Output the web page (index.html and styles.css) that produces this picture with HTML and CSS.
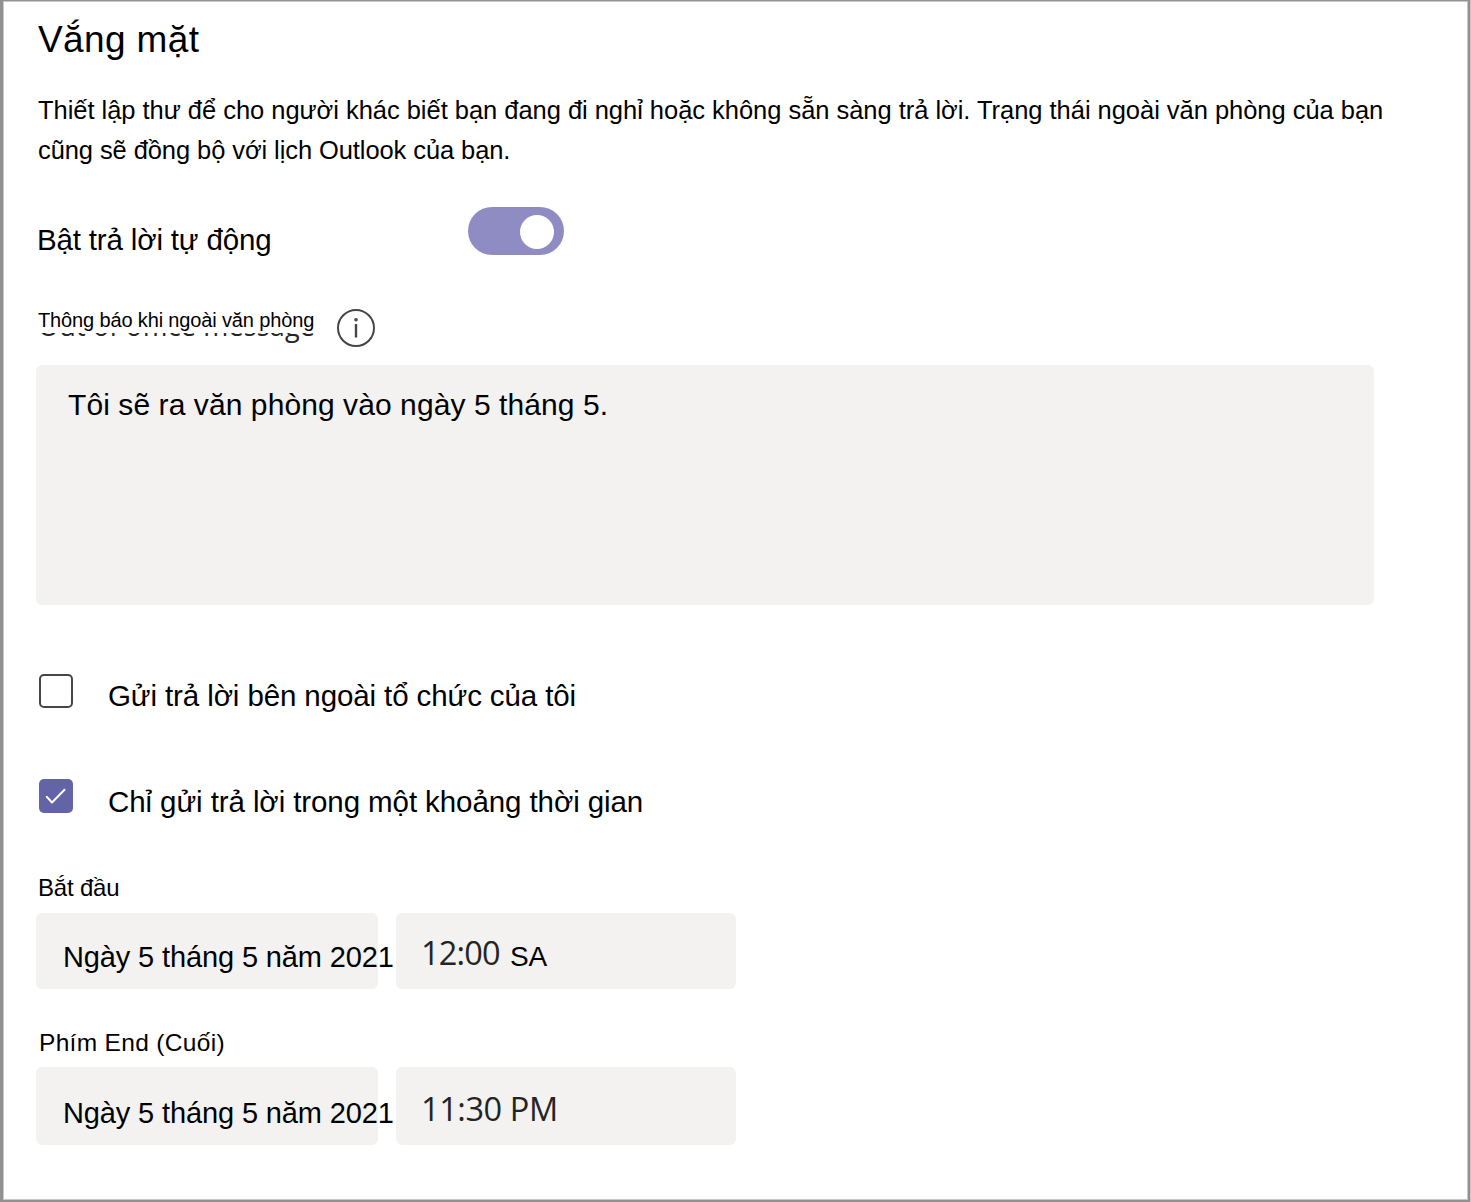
FILE: index.html
```html
<!DOCTYPE html>
<html lang="vi">
<head>
<meta charset="utf-8">
<title>Vắng mặt</title>
<link rel="stylesheet" href="styles.css">
</head>
<body>
<main class="panel">
  <h1 class="title">Vắng mặt</h1>
  <p class="intro">Thiết lập thư để cho người khác biết bạn đang đi nghỉ hoặc không sẵn sàng trả lời. Trạng thái ngoài văn phòng của bạn<br><span class="intro-end">cũng sẽ đồng bộ với lịch Outlook của bạn.</span></p>
  <div class="toggle-row">
    <span class="toggle-label">Bật trả lời tự động</span>
    <span class="toggle" role="switch" aria-checked="true"><span class="knob"></span></span>
  </div>
  <div class="message-head">
    <div class="message-label">
      <span class="message-text">Thông báo khi ngoài văn phòng</span>
      <span class="message-under"><span class="message-source">Out of office message</span></span>
    </div>
    <svg class="info" viewBox="0 0 40 40" width="40" height="40"><circle cx="20" cy="20" r="18" fill="none" stroke="#484644" stroke-width="2"/><circle cx="20" cy="11.800" r="1.800" fill="#484644"/><path d="M20 16v13.500" stroke="#484644" stroke-width="2.400"/></svg>
  </div>
  <div class="message-box">Tôi sẽ ra văn phòng vào ngày 5 tháng 5.</div>
  <div class="check-row outside">
    <span class="box"></span>
    <span class="check-label">Gửi trả lời bên ngoài tổ chức của tôi</span>
  </div>
  <div class="check-row period">
    <span class="box checked"><svg viewBox="0 0 34 34" width="34" height="34"><path d="M7.800 17.800l5.200 5.700L25.500 10.800" fill="none" stroke="#fff" stroke-width="2" stroke-linecap="round" stroke-linejoin="round"/></svg></span>
    <span class="check-label">Chỉ gửi trả lời trong một khoảng thời gian</span>
  </div>
  <div class="field-label start">Bắt đầu</div>
  <div class="fields">
    <div class="field date">Ngày 5 tháng 5 năm 2021</div>
    <div class="field time"><span class="clock">12:00</span><span class="half">SA</span></div>
  </div>
  <div class="field-label end">Phím End (Cuối)</div>
  <div class="fields last">
    <div class="field date">Ngày 5 tháng 5 năm 2021</div>
    <div class="field time"><span class="clock">11:30 PM</span></div>
  </div>
</main>
</body>
</html>
```
FILE: styles.css
```css
* { box-sizing: border-box; }
body { margin: 0; background: #c8c8c8; color: #000; font-family: "Liberation Sans", Arial, sans-serif; white-space: nowrap; }
.panel { width: 1470px; height: 1202px; overflow: hidden; padding: 19px 0 0 33px; border: solid #919191; border-width: 1px 2px 2px 3px; background: #fff; box-shadow: inset 0 0 0 1px #c8c8c8; }
.title { margin: 0 0 30px 2px; font-size: 37px; line-height: 40px; font-weight: 400; letter-spacing: 0.37px; }
.intro { margin: 0 0 0 2px; font-size: 25.5px; line-height: 40px; letter-spacing: -0.034px; }
.intro-end { letter-spacing: -0.09px; }
.toggle-row { display: flex; margin-top: 37px; height: 48px; }
.toggle-label { width: 432px; padding-left: 1px; font-size: 29.5px; line-height: 66px; letter-spacing: -0.16px; }
.toggle { display: flex; justify-content: flex-end; width: 96px; height: 48px; padding: 8px 10px; border-radius: 24px; background: #8e8cc3; }
.knob { width: 34px; height: 34px; border-radius: 50%; background: #fff; }
.message-head { display: flex; margin-top: 53px; height: 40px; }
.message-label { width: 300px; padding-left: 2px; }
.message-text { display: block; font-size: 20px; line-height: 25px; height: 25px; letter-spacing: -0.14px; }
.message-under { display: block; height: 14px; overflow: hidden; }
.message-source { display: block; margin-top: -21px; color: #252423; font: 27px/27px "Open Sans", sans-serif; letter-spacing: 0.17px; }
.message-box { margin-top: 17px; width: 1338px; height: 240px; border-radius: 6px; background: #f3f2f1; padding: 20px 32px; font-size: 30px; line-height: 40px; letter-spacing: 0.08px; }
.check-row { display: flex; gap: 35px; height: 34px; padding-left: 3px; font-size: 29.5px; line-height: 44px; letter-spacing: -0.11px; }
.outside { margin-top: 69px; }
.period { margin-top: 71px; line-height: 46px; letter-spacing: -0.09px; }
.box { width: 34px; height: 34px; border: 2px solid #484644; border-radius: 5px; }
.checked { border: 0; background: #6264a7; }
.box svg { display: block; }
.field-label { padding-left: 2px; font-size: 24px; line-height: 30px; letter-spacing: -0.2px; }
.start { margin-top: 60px; }
.end { margin-top: 39px; padding-left: 3px; font-size: 24.5px; letter-spacing: 0.32px; }
.fields { display: flex; gap: 18px; margin-top: 10px; }
.last { margin-top: 9px; }
.field { display: flex; height: 76px; border-radius: 6px; background: #f3f2f1; }
.last .field { height: 78px; }
.date { width: 342px; padding-left: 27px; font-size: 29px; line-height: 88px; letter-spacing: -0.13px; }
.last .date { line-height: 92px; }
.time { width: 340px; padding-left: 25px; }
.clock { color: #252423; font: 32.5px/80px "Open Sans", sans-serif; letter-spacing: -0.8px; }
.last .clock { line-height: 83px; letter-spacing: -0.42px; }
.half { margin-left: 10px; font-size: 28px; line-height: 87px; }
```
